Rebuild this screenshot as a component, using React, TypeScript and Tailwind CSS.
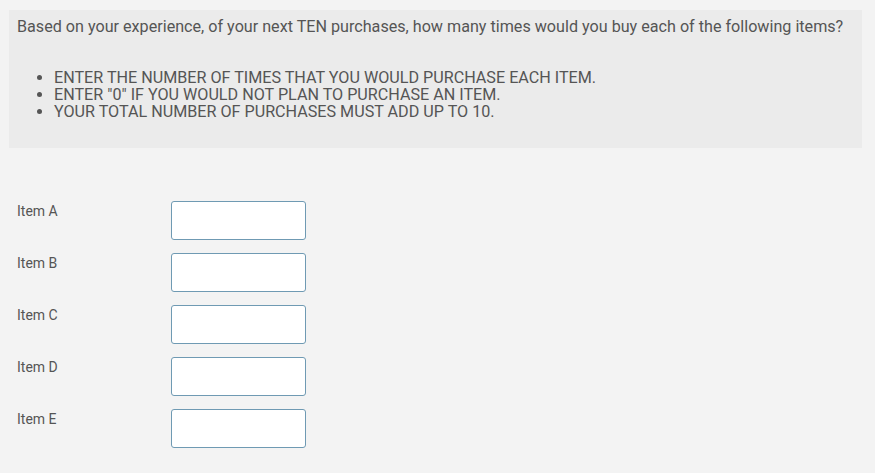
import React from "react";

const items = ["Item A", "Item B", "Item C", "Item D", "Item E"];

export default function App() {
  return (
    <div className="min-h-[473px] w-full bg-[#f3f3f3] text-[#555555]" style={{ fontFamily: "Roboto, 'Noto Sans', sans-serif" }}>
      <div className="pt-[10px] pl-[9px] pr-[13px]">
        <div className="bg-[#ebebeb] pl-[8px] pr-2 pt-[7px] pb-[28px]">
          <p className="text-[16.15px] leading-[19px]">
            Based on your experience, of your next TEN purchases, how many times would you buy each of the following items?
          </p>
          <ul className="mt-[33px] list-disc pl-[37px] text-[16.15px] leading-[17px]">
            <li>ENTER THE NUMBER OF TIMES THAT YOU WOULD PURCHASE EACH ITEM.</li>
            <li>ENTER "0" IF YOU WOULD NOT PLAN TO PURCHASE AN ITEM.</li>
            <li>YOUR TOTAL NUMBER OF PURCHASES MUST ADD UP TO 10.</li>
          </ul>
        </div>
      </div>
      <div className="mt-[53px] flex flex-col gap-[13px] pl-[17px]">
        {items.map((it) => (
          <div key={it} className="flex items-start">
            <label className="w-[154px] pt-[2px] text-[14px] leading-[17px]">{it}</label>
            <input
              type="text"
              className="h-[39px] w-[135px] rounded-[3px] border border-[#6f9ab3] bg-white outline-none"
            />
          </div>
        ))}
      </div>
    </div>
  );
}
